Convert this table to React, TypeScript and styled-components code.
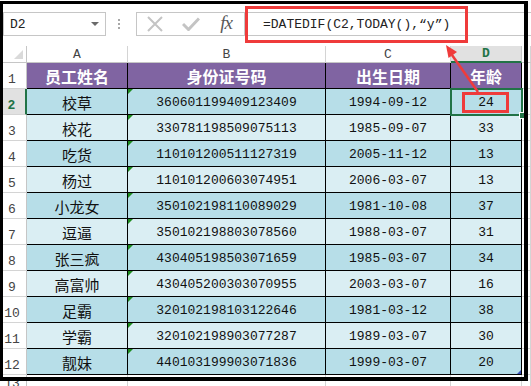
import React from "react";
import styled, { createGlobalStyle, css } from "styled-components";

const MONO = `"Liberation Mono", "DejaVu Sans Mono", monospace`;
const CJK = `"Noto Sans CJK SC", "Liberation Sans", sans-serif`;

const GlobalStyle = createGlobalStyle`
  html, body {
    margin: 0;
    padding: 0;
    background: #fff;
  }
  body {
    font-family: ${MONO};
  }
`;

const Page = styled.div`
  position: relative;
  width: 531px;
  height: 386px;
  overflow: hidden;
  background: #fff;
`;

/* ---------- formula bar ---------- */

const FormulaBar = styled.div`
  display: flex;
  height: 24px;
  margin: 12px 0 10px;
`;

const NameBox = styled.div`
  box-sizing: border-box;
  width: 103px;
  margin-left: 3px;
  padding: 0 6px 0 6px;
  border: 1px solid #c6c6c6;
  display: flex;
  align-items: center;
  justify-content: space-between;
  font: 13px ${MONO};
  color: #222;
`;

const Caret = styled.span`
  width: 0;
  height: 0;
  border-left: 4px solid transparent;
  border-right: 4px solid transparent;
  border-top: 4px solid #6a6a6a;
`;

const Grip = styled.div`
  width: 2px;
  margin: 0 16px 0 12px;
  display: flex;
  flex-direction: column;
  justify-content: center;
  gap: 2px;
`;

const GripDot = styled.span`
  width: 2px;
  height: 2px;
  background: #a8a8a8;
`;

const ButtonGroup = styled.div`
  box-sizing: border-box;
  width: 109px;
  border: 1px solid #c6c6c6;
  display: flex;
`;

const IconSlot = styled.div`
  flex: 1;
  display: flex;
  align-items: center;
  justify-content: center;
`;

const Fx = styled.span`
  font: italic 19px "Liberation Serif", "DejaVu Serif", serif;
  color: #595959;
  letter-spacing: -1px;
  margin-top: -2px;
`;

const FormulaInput = styled.div`
  flex: 1;
  display: flex;
  align-items: center;
  padding-left: 18px;
  border-top: 1px solid #c6c6c6;
  border-bottom: 1px solid #c6c6c6;
  font: 13px ${MONO};
  color: #222;
  white-space: nowrap;
`;

/* ---------- sheet ---------- */

const Sheet = styled.div`
  display: grid;
  grid-template-columns: 27px 101px 198px 125px 71px 1fr;
  grid-template-rows: 17px repeat(12, 26px) 18px;
`;

const Corner = styled.div`
  position: relative;
  box-sizing: border-box;
  border-right: 1px solid #c6c6c6;
  border-bottom: 1px solid #c6c6c6;

  &::after {
    content: "";
    position: absolute;
    right: 3px;
    bottom: 3px;
    width: 0;
    height: 0;
    border-left: 9px solid transparent;
    border-bottom: 9px solid #dadada;
  }
`;

const ColHead = styled.div<{ $active?: boolean }>`
  box-sizing: border-box;
  display: flex;
  align-items: center;
  justify-content: center;
  border-right: 1px solid #d4d4d4;
  border-bottom: 1px solid #c6c6c6;
  background: #fff;
  font: 13px ${MONO};
  color: #444;

  ${({ $active }) =>
    $active &&
    css`
      background: #e1e1e1;
      color: #217346;
      font-weight: bold;
      border-bottom: 2px solid #217346;
      border-right-color: #c6c6c6;
    `}
`;

const RowHead = styled.div<{ $active?: boolean }>`
  box-sizing: border-box;
  display: flex;
  align-items: flex-end;
  justify-content: center;
  padding: 0 2px 1px 0;
  border-right: 1px solid #c6c6c6;
  border-bottom: 1px solid #d4d4d4;
  background: #fff;
  font: 13px ${MONO};
  color: #444;

  ${({ $active }) =>
    $active &&
    css`
      background: #e1e1e1;
      color: #217346;
      font-weight: bold;
      border-right: 2px solid #217346;
    `}
`;

const HeadCell = styled.div`
  box-sizing: border-box;
  display: flex;
  align-items: center;
  justify-content: center;
  background: #8064a2;
  border-right: 1px solid #000;
  border-bottom: 1px solid #000;
  font: bold 16px ${CJK};
  color: #fff;
`;

type Tone = "dark" | "light";

const DataCell = styled.div<{
  $tone: Tone;
  $cjk?: boolean;
  $flag?: boolean;
  $selected?: boolean;
  $handle?: boolean;
}>`
  position: relative;
  box-sizing: border-box;
  display: flex;
  align-items: center;
  justify-content: center;
  padding-top: 2px;
  background: ${({ $tone }) => ($tone === "dark" ? "#b7dee8" : "#daeef3")};
  border-right: 1px solid #000;
  border-bottom: 1px solid #000;
  font: ${({ $cjk }) => ($cjk ? `15px ${CJK}` : `13px ${MONO}`)};
  color: #111;
  white-space: nowrap;

  ${({ $flag }) =>
    $flag &&
    css`
      &::before {
        content: "";
        position: absolute;
        top: 0;
        left: 0;
        width: 0;
        height: 0;
        border-top: 5px solid #1e8c1e;
        border-right: 5px solid transparent;
      }
    `}

  ${({ $selected }) =>
    $selected &&
    css`
      &::before {
        content: "";
        position: absolute;
        top: -1px;
        left: -1px;
        right: -2px;
        bottom: -2px;
        border: 2px solid #217346;
        z-index: 2;
      }
      &::after {
        content: "";
        position: absolute;
        right: -5px;
        bottom: -5px;
        width: 5px;
        height: 5px;
        background: #217346;
        border: 1px solid #fff;
        z-index: 3;
      }
    `}

  ${({ $handle }) =>
    $handle &&
    css`
      &::after {
        content: "";
        position: absolute;
        right: 0;
        bottom: 0;
        width: 0;
        height: 0;
        border-left: 4px solid transparent;
        border-bottom: 4px solid #3a4fb8;
      }
    `}
`;

const EmptyCell = styled.div`
  box-sizing: border-box;
  background: #fff;
  border-right: 1px solid #d4d4d4;
  border-bottom: 1px solid #d4d4d4;
`;

/* ---------- annotations ---------- */

const Frame = styled.div`
  position: absolute;
  top: 1px;
  left: 0;
  width: 528px;
  height: 380px;
  box-sizing: border-box;
  border-style: solid;
  border-color: #000;
  border-width: 3px 4px 4px 3px;
  pointer-events: none;
  z-index: 5;
`;

const RedBox = styled.div<{ $x: number; $y: number; $w: number; $h: number }>`
  position: absolute;
  left: ${({ $x }) => $x}px;
  top: ${({ $y }) => $y}px;
  width: ${({ $w }) => $w}px;
  height: ${({ $h }) => $h}px;
  box-sizing: border-box;
  border: 3px solid #ef3b3b;
  pointer-events: none;
  z-index: 4;
`;

const ArrowLayer = styled.svg`
  position: absolute;
  left: 0;
  top: 0;
  pointer-events: none;
  z-index: 4;
`;

const rows: [string, string, string, string][] = [
  ["校草", "360601199409123409", "1994-09-12", "24"],
  ["校花", "330781198509075113", "1985-09-07", "33"],
  ["吃货", "110101200511127319", "2005-11-12", "13"],
  ["杨过", "110101200603074951", "2006-03-07", "13"],
  ["小龙女", "350102198110089029", "1981-10-08", "37"],
  ["逗逼", "350102198803078560", "1988-03-07", "31"],
  ["张三疯", "430405198503071659", "1985-03-07", "34"],
  ["高富帅", "430405200303070955", "2003-03-07", "16"],
  ["足霸", "320102198103122646", "1981-03-12", "38"],
  ["学霸", "320102198903077287", "1989-03-07", "30"],
  ["靓妹", "440103199903071836", "1999-03-07", "20"],
];

const App = () => {
  return (
    <Page>
      <GlobalStyle />
      <FormulaBar>
        <NameBox>
          <span>D2</span>
          <Caret />
        </NameBox>
        <Grip>
          <GripDot />
          <GripDot />
          <GripDot />
        </Grip>
        <ButtonGroup>
          <IconSlot>
            <svg width="16" height="16" viewBox="0 0 16 16">
              <path d="M1 1 L15 15 M15 1 L1 15" stroke="#c4c4c4" strokeWidth="2" fill="none" />
            </svg>
          </IconSlot>
          <IconSlot>
            <svg width="18" height="14" viewBox="0 0 18 14">
              <path d="M1 7 L6.5 12.5 L17 1.5" stroke="#c4c4c4" strokeWidth="3" fill="none" />
            </svg>
          </IconSlot>
          <IconSlot>
            <Fx>fx</Fx>
          </IconSlot>
        </ButtonGroup>
        <FormulaInput>=DATEDIF(C2,TODAY(),“y”)</FormulaInput>
      </FormulaBar>

      <Sheet>
        <Corner />
        <ColHead>A</ColHead>
        <ColHead>B</ColHead>
        <ColHead>C</ColHead>
        <ColHead $active>D</ColHead>
        <ColHead />

        <RowHead>1</RowHead>
        <HeadCell>员工姓名</HeadCell>
        <HeadCell>身份证号码</HeadCell>
        <HeadCell>出生日期</HeadCell>
        <HeadCell>年龄</HeadCell>
        <EmptyCell />

        {rows.map(([name, id, birth, age], i) => {
          const tone: Tone = i % 2 === 0 ? "dark" : "light";
          return (
            <React.Fragment key={id}>
              <RowHead $active={i === 0}>{i + 2}</RowHead>
              <DataCell $tone={tone} $cjk>
                {name}
              </DataCell>
              <DataCell $tone={tone} $flag>
                {id}
              </DataCell>
              <DataCell $tone={tone}>{birth}</DataCell>
              <DataCell $tone={tone} $selected={i === 0} $handle={i === rows.length - 1}>
                {age}
              </DataCell>
              <EmptyCell />
            </React.Fragment>
          );
        })}

        <RowHead>13</RowHead>
        <EmptyCell />
        <EmptyCell />
        <EmptyCell />
        <EmptyCell />
        <EmptyCell />
      </Sheet>

      <Frame />
      <RedBox $x={245} $y={6} $w={223} $h={37} />
      <RedBox $x={462} $y={92} $w={47} $h={21} />
      <ArrowLayer width="531" height="386" viewBox="0 0 531 386">
        <line x1="478" y1="92" x2="452" y2="55" stroke="#ef3b3b" strokeWidth="2.5" />
        <polygon points="446,45 457,52 448.5,58" fill="#ef3b3b" />
      </ArrowLayer>
    </Page>
  );
};

export default App;
